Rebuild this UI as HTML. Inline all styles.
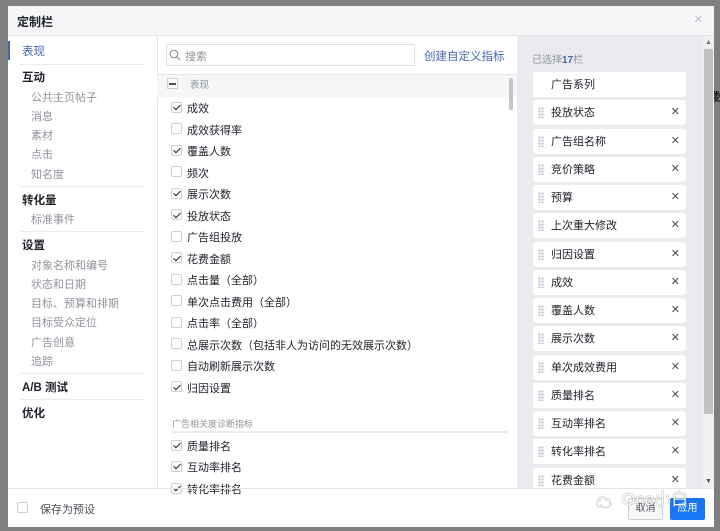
<!DOCTYPE html>
<html><head><meta charset="utf-8"><style>
*{margin:0;padding:0;box-sizing:border-box}
body{width:720px;height:531px;background:#7f7f7f;position:relative;overflow:hidden;font-family:"Liberation Sans","Noto Sans CJK SC",sans-serif;font-size:11px;color:#1d2129}
.a{position:absolute;white-space:nowrap}
#m{position:absolute;left:8px;top:6px;width:706px;height:521px;background:#fff;overflow:hidden}
.hd{position:absolute;left:0;top:0;width:706px;height:30px;background:#f5f6f7;border-bottom:1px solid #e5e5e5}
.nav{color:#90949c;font-size:11px}
.navh{font-weight:bold;font-size:11.5px;color:#1d2129}
.dv{position:absolute;left:12px;width:125px;height:1px;background:#e9ebee}
.cb{position:absolute;width:11px;height:11px;border:1px solid #ccd0d5;border-radius:2px;background:#fff}
.ck::after{content:"";position:absolute;left:2.5px;top:0.5px;width:3px;height:6px;border:solid #1d2129;border-width:0 1.3px 1.3px 0;transform:rotate(45deg)}
.it{position:absolute;left:525px;width:153px;height:25px;background:#fff;border-radius:3px;font-size:11px}
.it span{position:absolute;left:18px;top:4px}
.it i{position:absolute;left:5px;top:7px;width:6px;height:11px;background:radial-gradient(circle,#bec3c9 1px,transparent 1.3px) 0 0/3px 3px}
.it b{position:absolute;right:6px;top:5px;font-weight:normal;font-size:11px;color:#4b4f56}
</style></head><body>
<div class="a" style="left:713px;top:88px;font-size:12px;font-weight:bold;color:#222">数</div>
<div id="m">
<div class="hd"></div>
<div class="a" style="left:9px;top:7px;font-weight:bold;font-size:12px">定制栏</div>
<div class="a" style="left:686px;top:5px;font-size:15px;color:#bec3c9">×</div>
<div class="a" style="left:149px;top:30px;width:1px;height:452px;background:#e5e5e5"></div>
<div class="a" style="left:509px;top:30px;width:186px;height:452px;background:#e9ebee"></div>
<div class="a" style="left:695px;top:30px;width:11px;height:452px;background:#f1f1f1"></div>
<div class="a" style="left:696px;top:43px;width:9px;height:365px;background:#c1c1c1"></div>
<div class="a" style="left:697px;top:33px;font-size:7px;color:#777">▲</div>
<div class="a" style="left:697px;top:472px;font-size:7px;color:#555">▼</div>
<!-- nav -->
<div class="a" style="left:0;top:35px;width:2px;height:19px;background:#4267b2"></div>
<div class="a" style="left:14px;top:37px;color:#4267b2;font-size:11.5px">表现</div>
<div class="dv" style="top:58px"></div>
<div class="a navh" style="left:14px;top:63px">互动</div>
<div class="a nav" style="left:23px;top:83px">公共主页帖子</div>
<div class="a nav" style="left:23px;top:102px">消息</div>
<div class="a nav" style="left:23px;top:121px">素材</div>
<div class="a nav" style="left:23px;top:140px">点击</div>
<div class="a nav" style="left:23px;top:160px">知名度</div>
<div class="dv" style="top:180px"></div>
<div class="a navh" style="left:14px;top:186px">转化量</div>
<div class="a nav" style="left:23px;top:205px">标准事件</div>
<div class="dv" style="top:225px"></div>
<div class="a navh" style="left:14px;top:231px">设置</div>
<div class="a nav" style="left:23px;top:251px">对象名称和编号</div>
<div class="a nav" style="left:23px;top:270px">状态和日期</div>
<div class="a nav" style="left:23px;top:289px">目标、预算和排期</div>
<div class="a nav" style="left:23px;top:308px">目标受众定位</div>
<div class="a nav" style="left:23px;top:328px">广告创意</div>
<div class="a nav" style="left:23px;top:347px">追踪</div>
<div class="dv" style="top:367px"></div>
<div class="a navh" style="left:14px;top:373px">A/B 测试</div>
<div class="dv" style="top:393px"></div>
<div class="a navh" style="left:14px;top:399px">优化</div>
<!-- middle -->
<div class="a" style="left:158px;top:38px;width:249px;height:22px;border:1px solid #dddfe2;border-radius:2px"></div>
<svg class="a" style="left:161px;top:43px" width="12" height="12"><circle cx="5" cy="5" r="3.8" fill="none" stroke="#90949c" stroke-width="1.2"/><line x1="8" y1="8" x2="11" y2="11" stroke="#90949c" stroke-width="1.2"/></svg>
<div class="a" style="left:177px;top:42px;color:#90949c">搜索</div>
<div class="a" style="left:416px;top:42px;color:#4267b2;font-size:11.5px">创建自定义指标</div>
<div class="a" style="left:149px;top:68px;width:360px;height:1px;background:#e5e5e5"></div>
<div class="a" style="left:149px;top:69px;width:360px;height:22px;background:#f5f6f7"></div>
<div class="a" style="left:159px;top:72px;width:11px;height:11px;border:1px solid #ccd0d5;background:#fff"></div>
<div class="a" style="left:161px;top:77px;width:7px;height:1.5px;background:#4b4f56"></div>
<div class="a" style="left:182px;top:71px;color:#90949c;font-size:9.5px">表现</div>
<div class="a" style="left:501px;top:72px;width:4px;height:32px;border-radius:2px;background:#c4c4c4"></div>
<div id="mid"></div>
<div class="a" style="left:164px;top:411px;color:#90949c;font-size:9px">广告相关度诊断指标</div>
<div class="a" style="left:164px;top:425px;width:336px;height:2px;background:#e9ebee"></div>
<!-- right -->
<div class="a" style="left:524px;top:45px;color:#90949c;font-size:10px">已选择<b style="color:#4267b2">17</b>栏</div>
<div id="rt"></div>
<!-- footer -->
<div class="a" style="left:0;top:482px;width:706px;height:1px;background:#e5e5e5"></div>
<div class="cb" style="left:9px;top:496px"></div>
<div class="a" style="left:32px;top:495px;color:#4b4f56">保存为预设</div>
<div class="a" style="left:620px;top:492px;width:35px;height:22px;border:1px solid #ccd0d5;background:#f6f7f9;border-radius:2px;font-size:10px;text-align:center;line-height:20px;color:#4b4f56">取消</div>
<div class="a" style="left:662px;top:492px;width:35px;height:22px;background:#1877f2;border-radius:2px;font-size:10px;text-align:center;line-height:22px;color:#fff">应用</div>
<div class="a" style="left:614px;top:479px;font-size:17px;color:#fff;text-shadow:0 0 1px #333">One小白</div>
<div class="a" style="left:588px;top:483px;font-size:16px;color:#fff;text-shadow:0 0 1px #333">☁</div>
</div>
<script>
var mi=[["成效",1],["成效获得率",0],["覆盖人数",1],["频次",0],["展示次数",1],["投放状态",1],["广告组投放",0],["花费金额",1],["点击量（全部）",0],["单次点击费用（全部）",0],["点击率（全部）",0],["总展示次数（包括非人为访问的无效展示次数）",0],["自动刷新展示次数",0],["归因设置",1]];
var h="";mi.forEach(function(x,i){var y=102+i*21.5-1;h+='<div class="cb'+(x[1]?' ck':'')+'" style="left:163px;top:'+(y-5.5)+'px"></div><div class="a" style="left:179px;top:'+(y-7)+'px">'+x[0]+'</div>';});
[["质量排名",440],["互动率排名",461],["转化率排名",483]].forEach(function(x){var y=x[1]-1;h+='<div class="cb ck" style="left:163px;top:'+(y-5.5)+'px"></div><div class="a" style="left:179px;top:'+(y-7)+'px">'+x[0]+'</div>';});
document.getElementById("mid").outerHTML=h;
var ri=["广告系列","投放状态","广告组名称","竞价策略","预算","上次重大修改","归因设置","成效","覆盖人数","展示次数","单次成效费用","质量排名","互动率排名","转化率排名","花费金额"];
h="";ri.forEach(function(t,i){var top=66+i*28.25;h+='<div class="it" style="top:'+top+'px">'+(i?'<i></i>':'')+'<span>'+t+'</span>'+(i?'<b>✕</b>':'')+'</div>';});
document.getElementById("rt").outerHTML=h;
</script>
</body></html>
